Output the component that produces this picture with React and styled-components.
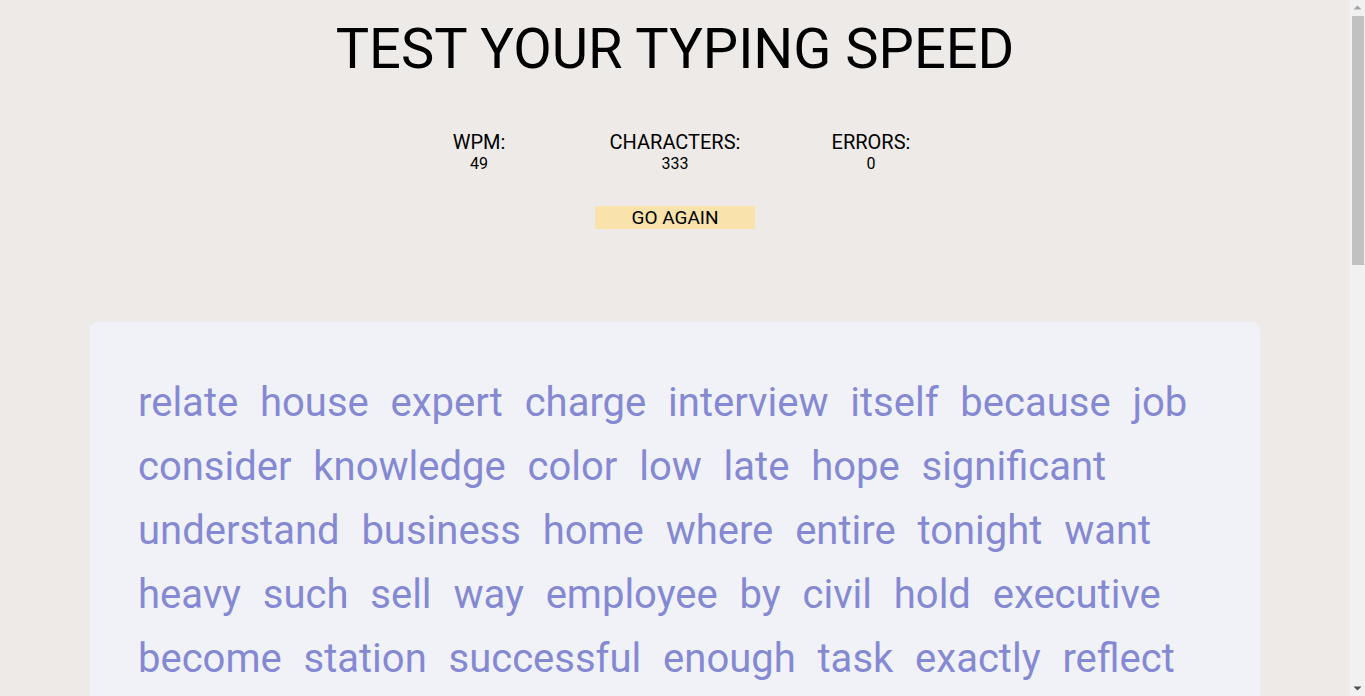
import React from 'react';
import styled, { createGlobalStyle } from 'styled-components';

const words = [
  'relate', 'house', 'expert', 'charge', 'interview', 'itself', 'because', 'job',
  'consider', 'knowledge', 'color', 'low', 'late', 'hope', 'significant',
  'understand', 'business', 'home', 'where', 'entire', 'tonight', 'want',
  'heavy', 'such', 'sell', 'way', 'employee', 'by', 'civil', 'hold', 'executive',
  'become', 'station', 'successful', 'enough', 'task', 'exactly', 'reflect',
  'recent', 'science', 'public', 'trial', 'those', 'yard', 'mother', 'watch',
  'property', 'official', 'leader', 'tough', 'sense', 'plant', 'early',
];

const stats = [
  { label: 'WPM:', value: 49 },
  { label: 'CHARACTERS:', value: 333 },
  { label: 'ERRORS:', value: 0 },
];

function App() {
  return (
    <>
      <GlobalStyle />
      <Page>
        <Title>TEST YOUR TYPING SPEED</Title>
        <Stats>
          {stats.map((s) => (
            <Stat key={s.label}>
              <StatLabel>{s.label}</StatLabel>
              <StatValue>{s.value}</StatValue>
            </Stat>
          ))}
        </Stats>
        <AgainButton>GO AGAIN</AgainButton>
        <WordBox>
          {words.map((w, i) => (
            <Word key={i}>{w}</Word>
          ))}
        </WordBox>
      </Page>
      <ScrollTrack>
        <Arrow viewBox="0 0 15 16">
          <path d="M3.5 9.5 L7.5 5.5 L11.5 9.5 Z" fill="#a3a3a3" />
        </Arrow>
        <Thumb />
        <Arrow viewBox="0 0 15 16">
          <path d="M3.5 6.5 L7.5 10.5 L11.5 6.5 Z" fill="#505050" />
        </Arrow>
      </ScrollTrack>
    </>
  );
}

export default App;

const GlobalStyle = createGlobalStyle`
  html, body {
    margin: 0;
    padding: 0;
    background: #eeeae7;
    font-family: Roboto, "Liberation Sans", sans-serif;
    color: #000;
  }
`;

const Page = styled.div`
  display: flex;
  flex-direction: column;
  align-items: center;
  margin-right: 15px;
  padding-top: 16px;
  padding-bottom: 60px;
`;

const Title = styled.h1`
  margin: 0;
  font-size: 56px;
  font-weight: 400;
  line-height: normal;
`;

const Stats = styled.div`
  display: grid;
  grid-template-columns: repeat(3, 196px);
  margin-top: 48px;
`;

const Stat = styled.div`
  display: flex;
  flex-direction: column;
  align-items: center;
`;

const StatLabel = styled.div`
  font-size: 20px;
  line-height: normal;
`;

const StatValue = styled.div`
  font-size: 16px;
  line-height: normal;
`;

const AgainButton = styled.button`
  margin-top: 33px;
  width: 160px;
  height: 23px;
  padding: 0;
  border: none;
  background: #fae2ab;
  font-family: Roboto, "Liberation Sans", sans-serif;
  font-size: 19px;
  color: #000;
  cursor: pointer;
`;

const WordBox = styled.div`
  box-sizing: border-box;
  width: calc(100% - 180px);
  margin-top: 93px;
  padding: 49px 48px 48px;
  background: #f1f2f7;
  border-radius: 8px;
  display: flex;
  flex-wrap: wrap;
  column-gap: 21.8px;
`;

const Word = styled.span`
  font-size: 40px;
  line-height: 64px;
  color: #8589d3;
`;

/* stand-in for the browser's vertical scrollbar */
const ScrollTrack = styled.div`
  position: fixed;
  top: 0;
  right: 0;
  bottom: 0;
  width: 15px;
  background: #f1f1f1;
  display: flex;
  flex-direction: column;
`;

const Arrow = styled.svg`
  width: 15px;
  height: 16px;
  flex-shrink: 0;
`;

const Thumb = styled.div`
  margin: 0 1px auto 2px;
  height: 249px;
  background: #c1c1c1;
`;
